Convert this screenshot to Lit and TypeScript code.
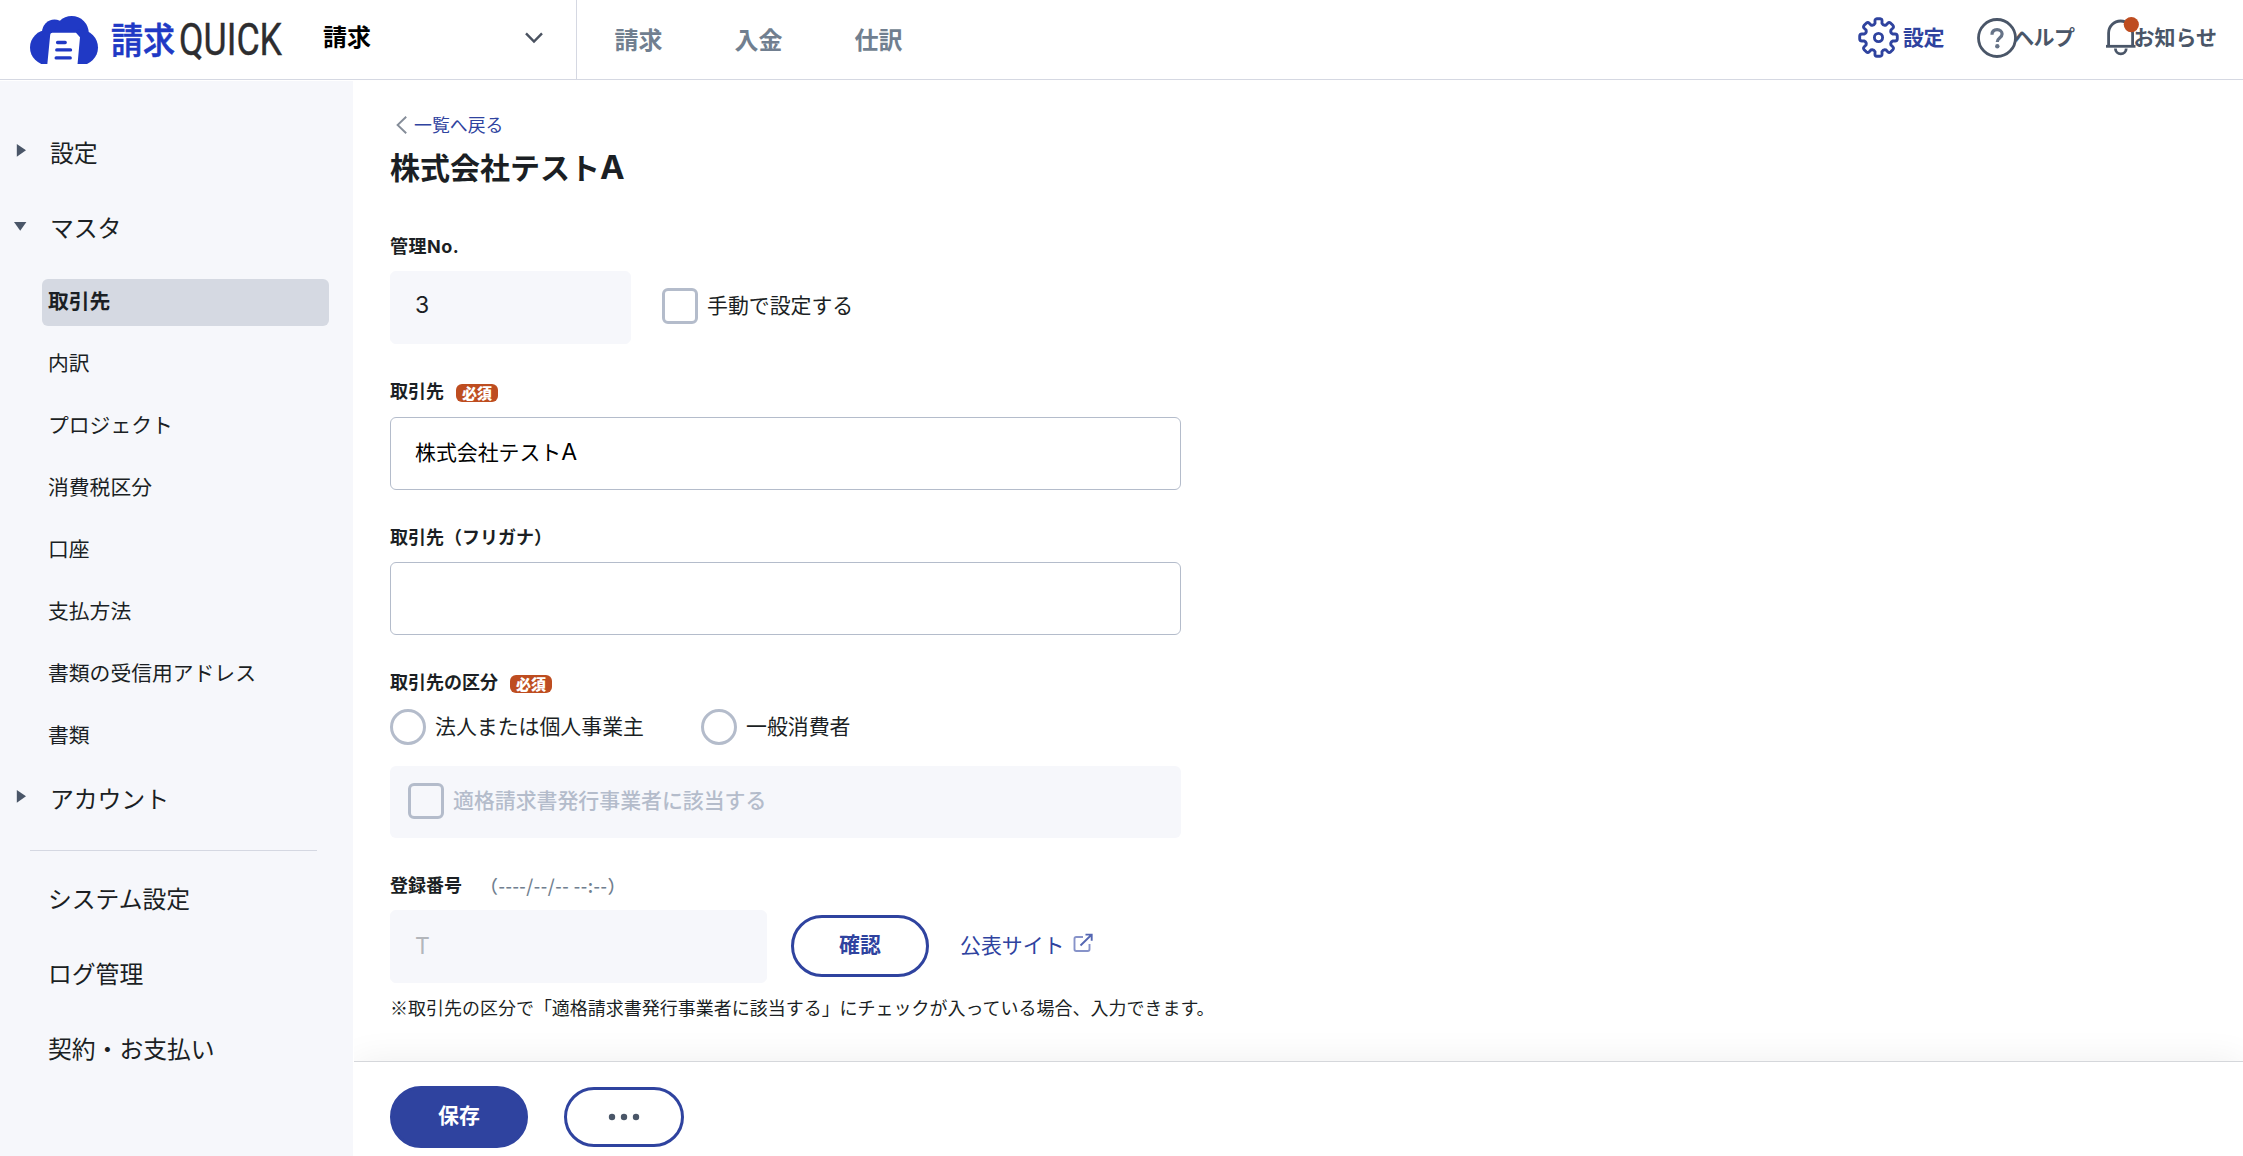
import { LitElement, html, css, svg } from "lit";
import { customElement, property } from "lit/decorators.js";
import { classMap } from "lit/directives/class-map.js";

const GEAR_TEETH = 8;

/** Builds the rounded outline of the settings gear, centred on 20,20. */
function gearPath(): string {
  const step = (Math.PI * 2) / GEAR_TEETH;
  const at = (r: number, a: number) =>
    `${(20 + r * Math.sin(a)).toFixed(2)} ${(20 - r * Math.cos(a)).toFixed(2)}`;
  let d = "";
  for (let i = 0; i < GEAR_TEETH; i++) {
    const a = i * step;
    d += `${i === 0 ? "M" : "L"}${at(14.2, a - 0.24)}`;
    d += `L${at(16.6, a - 0.21)}`;
    d += `Q${at(18.4, a - 0.19)} ${at(18.4, a - 0.08)}`;
    d += `L${at(18.4, a + 0.08)}`;
    d += `Q${at(18.4, a + 0.19)} ${at(16.6, a + 0.21)}`;
    d += `L${at(14.2, a + 0.24)}`;
    d += `Q${at(12.2, a + step / 2)} ${at(14.2, a + step - 0.24)}`;
  }
  return d + "Z";
}

const baseFont = css`
  :host {
    font-family: "Noto Sans CJK JP", "Liberation Sans", sans-serif;
    color: #1b1f24;
  }
  * {
    box-sizing: border-box;
  }
  svg {
    display: block;
    flex: none;
  }
`;

@customElement("app-header")
class AppHeader extends LitElement {
  static styles = [
    baseFont,
    css`
      :host {
        display: flex;
        height: 80px;
        border-bottom: 1px solid #d5d8e2;
        background: #fff;
        white-space: nowrap;
      }
      .brand {
        display: flex;
        width: 577px;
        padding: 0 32px 0 30px;
        border-right: 1px solid #d5d8e2;
      }
      .logo {
        overflow: visible;
      }
      .product {
        margin: 16px 0 0 32px;
        font-size: 24px;
        line-height: 40px;
        font-weight: 700;
        color: #000;
        flex: 1;
      }
      .chevron {
        margin: 32px 1px 0 0;
      }
      .tabs {
        display: flex;
        gap: 72px;
        margin-left: 37.5px;
        font-size: 24px;
        line-height: 77px;
        font-weight: 700;
        color: #717f90;
      }
      .tools {
        display: flex;
        margin-left: auto;
        padding: 17px 26px 0 0;
        font-size: 21px;
        line-height: 38px;
        font-weight: 700;
        color: #4a5668;
      }
      .tool {
        display: flex;
      }
      .settings {
        color: #2f439f;
        gap: 4px;
        margin-right: 33px;
      }
      .help {
        margin-right: 31px;
      }
      .bell {
        margin-right: -6px;
      }
      .help span {
        margin-left: -4px;
        letter-spacing: -0.6px;
      }
      .settings span {
        letter-spacing: -0.4px;
      }
    `,
  ];

  render() {
    return html`
      <div class="brand">
        <svg class="logo" width="261" height="79" viewBox="0 -16 261 79">
          <clipPath id="cloud-base"><rect width="69" height="48" /></clipPath>
          <g fill="#2039c5" clip-path="url(#cloud-base)">
            <circle cx="17.5" cy="31.5" r="17.5" />
            <circle cx="24.5" cy="16" r="12.4" />
            <circle cx="41.7" cy="17" r="17" />
            <circle cx="50.2" cy="31.5" r="17.8" />
          </g>
          <path d="M17.3 48.4 20.2 18.8q.2-2.1 2.2-2.1H46l4 4.6-2.5 27.1z" fill="#fff" />
          <path
            d="M27.6 26.5h7.6M26.8 33.9h13.7M26.2 41.9h14"
            stroke="#2039c5"
            stroke-width="3.4"
            stroke-linecap="round"
          />
          <text
            x="81"
            y="37.5"
            font-size="36"
            font-weight="500"
            fill="#2039c5"
            stroke="#2039c5"
            stroke-width=".6"
            textLength="64"
            lengthAdjust="spacingAndGlyphs"
            font-family="Noto Sans CJK JP"
          >請求</text>
          <text
            x="149"
            y="39"
            font-size="45"
            fill="#2d2d2f"
            stroke="#2d2d2f"
            stroke-width=".4"
            textLength="103"
            lengthAdjust="spacingAndGlyphs"
            font-family="Roboto"
          >QUICK</text>
        </svg>
        <div class="product">請求</div>
        <svg class="chevron" width="18" height="12" viewBox="0 0 18 12">
          <path d="M1 1.3 9 9.6l8-8.3" fill="none" stroke="#4a5260" stroke-width="2.4" />
        </svg>
      </div>
      <nav class="tabs"><span>請求</span><span>入金</span><span>仕訳</span></nav>
      <div class="tools">
        <div class="tool settings">
          <svg width="41" height="41" viewBox="0 0 40 40">
            <path d=${gearPath()} fill="none" stroke="currentColor" stroke-width="2.8" stroke-linejoin="round" />
            <circle cx="20" cy="20" r="4" fill="none" stroke="currentColor" stroke-width="2.8" />
          </svg>
          <span>設定</span>
        </div>
        <div class="tool help">
          <svg width="40" height="41" viewBox="0 0 40 41">
            <circle cx="20" cy="21" r="18.5" fill="none" stroke="currentColor" stroke-width="2.8" />
            <path
              d="M15 17.8c0-3.4 2.2-5.1 5.1-5.1s5 1.7 5 4.4c0 4-4.8 4-4.8 7.8"
              fill="none"
              stroke="#667387"
              stroke-width="3.2"
            />
            <circle cx="20.3" cy="29.3" r="2.2" fill="#667387" />
          </svg>
          <span>ヘルプ</span>
        </div>
        <div class="tool">
          <svg class="bell" width="34" height="41" viewBox="0 0 34 41">
            <path d="M3.6 28.4V16a12 12 0 0 1 24 0v12.4" fill="none" stroke="currentColor" stroke-width="2.8" />
            <path d="M1 29.3h29.5" stroke="currentColor" stroke-width="2.8" />
            <path d="M10.4 31.5a5.4 5.4 0 0 0 10.8 0" fill="none" stroke="currentColor" stroke-width="2.8" />
            <circle cx="26.3" cy="7.6" r="7.6" fill="#be4d20" />
          </svg>
          <span>お知らせ</span>
        </div>
      </div>
    `;
  }
}

const MASTER_ITEMS = [
  "取引先",
  "内訳",
  "プロジェクト",
  "消費税区分",
  "口座",
  "支払方法",
  "書類の受信用アドレス",
  "書類",
];

@customElement("side-menu")
class SideMenu extends LitElement {
  static styles = [
    baseFont,
    css`
      :host {
        display: block;
        background: #f6f7fb;
        white-space: nowrap;
        padding-top: 35px;
      }
      .group {
        display: flex;
        height: 75px;
        line-height: 71px;
        font-size: 23.9px;
        padding-left: 14px;
        letter-spacing: -0.1px;
      }
      .arrow {
        width: 36px;
        padding-top: 28px;
      }
      .list {
        padding: 13px 24px 0 42px;
        display: flex;
        flex-direction: column;
        gap: 15px;
      }
      .item {
        height: 47px;
        padding-left: 6px;
        border-radius: 6px;
        font-size: 20.8px;
        line-height: 42px;
      }
      .active {
        background: #d5d9e2;
        font-weight: 700;
      }
      .rule {
        height: 1px;
        margin: 13px 36px 12px 30px;
        background: #d5d8e2;
      }
      .link {
        height: 75px;
        line-height: 70px;
        padding-left: 48px;
        font-size: 23.8px;
      }
      .late {
        margin-top: 2px;
      }
    `,
  ];

  private arrow(open: boolean) {
    return html`<span class="arrow"
      ><svg width="14" height="14" viewBox="0 0 14 14">
        ${open
          ? svg`<path d="M0 3h12.4L6.2 11.8z" fill="#4a5668"/>`
          : svg`<path d="M2.8 0 12 6.3 2.8 12.7z" fill="#4a5668"/>`}
      </svg></span
    >`;
  }

  render() {
    return html`
      <div class="group">${this.arrow(false)}<span>設定</span></div>
      <div class="group">${this.arrow(true)}<span>マスタ</span></div>
      <div class="list">
        ${MASTER_ITEMS.map(
          (name, i) => html`<div class=${classMap({ item: true, active: i === 0 })}>${name}</div>`
        )}
      </div>
      <div class="group late">${this.arrow(false)}<span>アカウント</span></div>
      <div class="rule"></div>
      <div class="link">システム設定</div>
      <div class="link">ログ管理</div>
      <div class="link">契約・お支払い</div>
    `;
  }
}

@customElement("field-label")
class FieldLabel extends LitElement {
  @property() text = "";
  @property({ type: Boolean }) required = false;

  static styles = [
    baseFont,
    css`
      :host {
        display: flex;
        align-items: center;
        height: 26px;
        font-size: 18px;
        line-height: 26px;
        font-weight: 700;
        white-space: nowrap;
      }
      .text {
        font-family: "Inter", "Noto Sans CJK JP", sans-serif;
      }
      .badge {
        margin: 2px 0 0 12px;
        width: 42px;
        height: 18px;
        border-radius: 6px;
        background: #be4d20;
        color: #fff;
        font-size: 15px;
        line-height: 17px;
        font-weight: 900;
        text-align: center;
      }
    `,
  ];

  render() {
    return html`<span class="text">${this.text}</span>${this.required
        ? html`<span class="badge">必須</span>`
        : null}<slot></slot>`;
  }
}

@customElement("app-root")
class AppRoot extends LitElement {
  static styles = [
    baseFont,
    css`
      :host {
        display: flex;
        flex-direction: column;
        width: 100%;
        height: 1156px;
        overflow: hidden;
        background: #fff;
      }
      .body {
        flex: 1;
        display: grid;
        grid-template-columns: 353px 1fr;
        padding-top: 1px;
        min-height: 0;
      }
      .page {
        display: flex;
        flex-direction: column;
        min-width: 0;
        padding-left: 1px;
        white-space: nowrap;
      }
      .form {
        height: 980px;
        padding: 30px 0 0 36px;
        font-size: 20.9px;
      }
      .back {
        display: flex;
        align-items: center;
        gap: 7px;
        height: 28px;
        padding-left: 6px;
        font-size: 17.9px;
        line-height: 28px;
        color: #2f439f;
      }
      .back span {
        margin-top: -2px;
      }
      .title {
        margin: 8px 0 0;
        height: 44px;
        font-family: "Inter", "Noto Sans CJK JP", sans-serif;
        font-size: 30px;
        line-height: 43px;
        font-weight: 700;
      }
      .latin {
        font-family: "Inter", sans-serif;
        font-size: 1.1em;
        line-height: 1;
      }
      .no {
        margin-top: 43px;
        letter-spacing: 0.5px;
      }
      .row {
        display: flex;
        align-items: center;
      }
      .caption {
        margin-top: -4px;
      }
      .input {
        width: 791px;
        height: 73px;
        padding-left: 24px;
        border: 1px solid #b4bccb;
        border-radius: 6px;
        line-height: 67px;
        color: #000;
      }
      .disabled {
        border-color: #f6f7fb;
        background: #f6f7fb;
        color: #1b1f24;
        font-family: "Inter", sans-serif;
        font-size: 23px;
      }
      .small {
        width: 241px;
        margin-right: 31px;
      }
      .medium {
        width: 377px;
        color: #b3b6bb;
        line-height: 71px;
      }
      .name-row {
        height: 73px;
        margin-top: 11px;
      }
      .box,
      .radio {
        width: 36px;
        height: 36px;
        border: 3px solid #b4bccb;
        border-radius: 6px;
        margin-right: 9px;
        flex: none;
      }
      .name-row .box {
        margin-top: -3px;
      }
      .name-row .caption {
        margin-top: -7px;
      }
      .radio {
        border-radius: 50%;
      }
      .kind {
        width: 311px;
      }
      .radios {
        height: 36px;
        margin-top: 13px;
      }
      .panel {
        width: 791px;
        height: 72px;
        margin-top: 21px;
        padding: 0 0 2px 18px;
        border-radius: 6px;
        background: #f6f7fb;
        color: #b4bccb;
        font-weight: 500;
      }
      .stamp {
        margin: -2px 0 0 18px;
        color: #717f90;
        font-weight: 500;
        letter-spacing: 0.52px;
      }
      .pill {
        display: flex;
        justify-content: center;
        width: 138px;
        height: 62px;
        border: 3px solid #2f439f;
        border-radius: 31px;
        color: #2f439f;
        font-weight: 700;
        font-size: 20.9px;
        line-height: 51px;
        background: #fff;
      }
      .check {
        margin: -1px 31px 0 24px;
      }
      .site {
        display: flex;
        align-items: center;
        gap: 8px;
        margin-top: -6px;
        color: #2f439f;
      }
      .site svg {
        margin-top: -1px;
      }
      .note {
        height: 26px;
        margin-top: 11px;
        font-size: 17.99px;
        line-height: 26px;
      }
      .l1 {
        margin-top: 35px;
      }
      .i1 {
        margin-top: 12px;
      }
      .l2 {
        margin-top: 35px;
      }
      .i2 {
        margin-top: 11px;
      }
      .l3 {
        margin-top: 35px;
      }
      .l4 {
        margin-top: 35px;
      }
      .bar {
        flex: 1;
        display: flex;
        align-items: flex-start;
        gap: 36px;
        padding: 24px 0 0 36px;
        border-top: 1px solid #d5d7db;
        background: #fff;
        box-shadow: 0 0 36px rgba(0, 0, 0, 0.07);
        clip-path: inset(-60px 0 0 0);
      }
      .save {
        background: #2f439f;
        color: #fff;
      }
      .more {
        align-items: center;
        width: 120px;
        height: 60px;
        margin-top: 1px;
      }
    `,
  ];

  render() {
    return html`
      <app-header></app-header>
      <div class="body">
        <side-menu></side-menu>
        <main class="page">
          <div class="form">
            <div class="back">
              <svg width="11" height="18" viewBox="0 0 11 18">
                <path d="M10.2.8 1.6 9l8.6 8.2" fill="none" stroke="#858d99" stroke-width="1.9" />
              </svg>
              <span>一覧へ戻る</span>
            </div>
            <h1 class="title">株式会社テスト<span class="latin">A</span></h1>

            <field-label class="no" text="管理No."></field-label>
            <div class="row name-row">
              <div class="input disabled small">3</div>
              <span class="box"></span><span class="caption">手動で設定する</span>
            </div>

            <field-label class="l1" text="取引先" required></field-label>
            <div class="input i1">株式会社テスト<span class="latin">A</span></div>

            <field-label class="l2" text="取引先（フリガナ）"></field-label>
            <div class="input i2"></div>

            <field-label class="l3" text="取引先の区分" required></field-label>
            <div class="row radios">
              <div class="row kind">
                <span class="radio"></span><span class="caption">法人または個人事業主</span>
              </div>
              <span class="radio"></span><span class="caption">一般消費者</span>
            </div>
            <div class="row panel">
              <span class="box"></span><span class="caption">適格請求書発行事業者に該当する</span>
            </div>

            <field-label class="l4" text="登録番号"><span class="stamp">（----/--/-- --:--）</span></field-label>
            <div class="row i2">
              <div class="input disabled medium">T</div>
              <span class="pill check">確認</span>
              <span class="site">
                公表サイト
                <svg width="22" height="20" viewBox="0 0 22 20">
                  <path
                    d="M11 4H4.2Q2.5 4 2.5 5.7v10.6Q2.5 18 4.2 18h11.6q1.7 0 1.7-1.7V11"
                    fill="none"
                    stroke="#8793c9"
                    stroke-width="1.9"
                  />
                  <path d="M8.5 12.5 19.5 1.7M13.5 1.6h6.2v6.2" fill="none" stroke="#5567b3" stroke-width="1.9" />
                </svg>
              </span>
            </div>
            <div class="note">※取引先の区分で「適格請求書発行事業者に該当する」にチェックが入っている場合、入力できます。</div>
          </div>
          <div class="bar">
            <span class="pill save">保存</span>
            <span class="pill more">
              <svg width="32" height="8" viewBox="0 0 32 8">
                <g fill="#4a5668">
                  <circle cx="4" cy="4" r="3.2" />
                  <circle cx="16" cy="4" r="3.2" />
                  <circle cx="28" cy="4" r="3.2" />
                </g>
              </svg>
            </span>
          </div>
        </main>
      </div>
    `;
  }
}
